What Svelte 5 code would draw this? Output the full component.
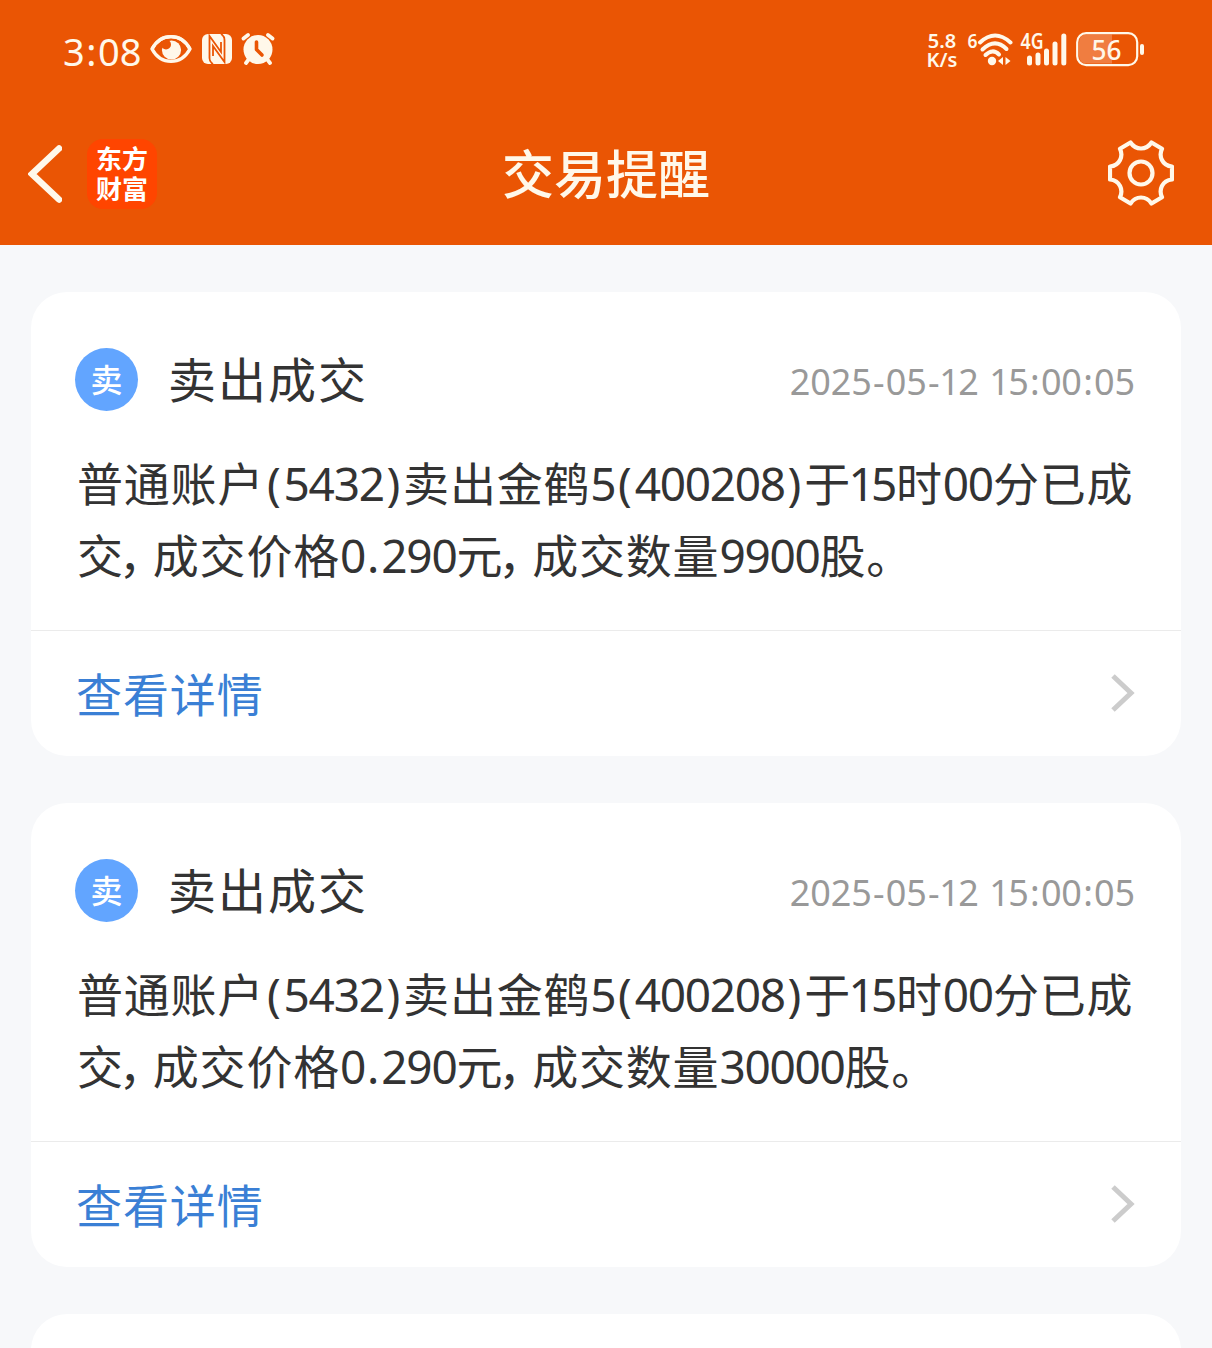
<!-- TradeAlerts.svelte -->
<script>
  /**
   * @type {{ title: string, time: string, lines: string[] }[]}
   */
  const alerts = [
    {
      title: '卖出成交',
      time: '2025-05-12 15:00:05',
      lines: ['普通账户(5432)卖出金鹤5(400208)于15时00分已成', '交，成交价格0.290元，成交数量9900股。']
    },
    {
      title: '卖出成交',
      time: '2025-05-12 15:00:05',
      lines: ['普通账户(5432)卖出金鹤5(400208)于15时00分已成', '交，成交价格0.290元，成交数量30000股。']
    }
  ];

  /**
   * Split a line into runs, so that each kind of glyph gets its own spacing
   * @param {string} text
   */
  function toRuns(text) {
    return text.match(/[()]|1|[02-9]+|[-.:\s]|，|[^\x00-\x7f，]+/g).map((run) => ({ run, kind: kindOf(run) }));
  }

  function kindOf(run) {
    if (run === '，') return 'comma';
    if (run === '1') return 'one';
    if (/[()]/.test(run)) return 'paren';
    if (/[-.:\s]/.test(run)) return 'mark';
    if (/\d/.test(run)) return 'num';
    return 'han';
  }
</script>

{#snippet runs(text)}{#each toRuns(text) as { run, kind }}<span class={kind}>{run}</span>{/each}{/snippet}

<div class="screen">
  <header>
    <div class="status">
      <div class="status-left">
        <span class="clock">{@render runs('3:08')}</span>
        <svg class="eye" width="42" height="30" viewBox="0 0 42 30">
          <path d="M2 15C11 -1.5 31 -1.5 40 15C31 31.5 11 31.5 2 15Z" fill="none" stroke="#fff8ea" stroke-width="3.4" stroke-linejoin="round" />
          <circle cx="21.500" cy="16" r="9.600" fill="#fff8ea" />
          <circle cx="16" cy="10.500" r="5" fill="#ea5504" />
          <path d="M2 15C11 -1.5 31 -1.5 40 15" fill="none" stroke="#fff8ea" stroke-width="3.4" />
        </svg>
        <svg class="nfc" width="30" height="30" viewBox="0 0 30 30">
          <rect width="30" height="30" rx="6" fill="#fff8ea" />
          <g fill="none" stroke="#ea5504" stroke-width="1.800">
            <path d="M11 30Q7.500 28 7.500 24V2L19 18V8" />
            <path d="M19 0Q22.500 2 22.500 6V28L11 12V22" />
          </g>
        </svg>
        <svg class="alarm" width="34" height="34" viewBox="0 0 34 34">
          <circle cx="17" cy="17.500" r="14.500" fill="#fff8ea" />
          <path d="M2.500 6.500L7 3M31.500 6.500L27 3M5 31L8 27M29 31L26 27" stroke="#fff8ea" stroke-width="3.800" stroke-linecap="round" />
          <path d="M15.500 10V17.500L21 23" fill="none" stroke="#ea5504" stroke-width="3.600" stroke-linecap="round" stroke-linejoin="round" />
        </svg>
      </div>
      <div class="status-right">
        <div class="speed"><span>5.8</span><span>K/s</span></div>
        <svg class="wifi" width="46" height="52" viewBox="0 -8 46 52">
          <text x="0.500" y="17" font-size="20" textLength="10" lengthAdjust="spacingAndGlyphs">6</text>
          <g fill="none" stroke="#fff8ea" stroke-width="4" stroke-linecap="round">
            <path d="M13 11.500Q28 -2.500 43.500 11.500" />
            <path d="M15.500 18.500Q28 6.500 39.500 18" />
            <path d="M18.500 24Q25.500 17 32 23.500" />
          </g>
          <circle cx="25" cy="30" r="4.200" fill="#fff8ea" />
          <path d="M36 26V34L31 30ZM38.500 26V34L43.500 30Z" fill="#fff8ea" />
        </svg>
        <svg class="signal" width="47" height="52" viewBox="0 -8 47 52">
          <text x="0.500" y="18" font-size="21" textLength="23" lengthAdjust="spacingAndGlyphs">4G</text>
          <g stroke="#fff8ea" stroke-width="5" stroke-linecap="round">
            <path d="M9.500 27V32" />
            <path d="M18 24V32" />
            <path d="M26.500 20V32" />
            <path d="M35 13V32" />
            <path d="M43.800 5V32" />
          </g>
        </svg>
        <svg class="battery" width="69" height="36" viewBox="0 0 69 36">
          <path d="M36 3.500V32.500H11Q3 32.500 3 24.500V11.500Q3 3.500 11 3.500Z" fill="#f07d40" />
          <rect x="1.200" y="2.200" width="60" height="32" rx="9" fill="none" stroke="#fff8ea" stroke-width="2.200" />
          <rect x="64" y="13" width="4" height="11" rx="2" fill="#fff8ea" />
          <text class="charge" x="15.500" y="28.500" font-size="27" textLength="30" lengthAdjust="spacingAndGlyphs">56</text>
        </svg>
      </div>
    </div>
    <nav>
      <div class="nav-side">
        <svg class="back" width="34" height="58" viewBox="0 0 34 58">
          <path d="M31 3.500L4 29L31 54.500" fill="none" stroke="#fff8ea" stroke-width="6.500" stroke-linecap="round" stroke-linejoin="miter" />
        </svg>
        <div class="logo"><span>东方</span><span>财富</span></div>
      </div>
      <h1>交易提醒</h1>
      <div class="nav-side end">
        <svg class="gear" width="66" height="66" viewBox="0 0 66 66">
          <path
            d="M12 8.800L22.500 2.500C25.500 7 29 8.500 33 8.500S40.500 7 43.500 2.500L54 8.800C50.500 16 54 25.500 64 26.500V39.500C54 40.500 50.500 50 54 57.200L43.500 63.500C40.500 59 37 57.500 33 57.500S25.500 59 22.500 63.500L12 57.200C15.500 50 12 40.500 2 39.500V26.500C12 25.500 15.500 16 12 8.800Z"
            fill="none" stroke="#fff8ea" stroke-width="4.200" stroke-linejoin="round"
          />
          <circle cx="33" cy="33" r="11.500" fill="none" stroke="#fff8ea" stroke-width="4.200" />
        </svg>
      </div>
    </nav>
  </header>

  <main>
    {#each alerts as alert}
      <article class="card">
        <div class="card-body">
          <div class="card-head">
            <span class="badge">卖</span>
            <h2>{alert.title}</h2>
            <time>{@render runs(alert.time)}</time>
          </div>
          <div class="message">
            {#each alert.lines as line}
              <p>{@render runs(line)}</p>
            {/each}
          </div>
        </div>
        <div class="card-link">
          <span>查看详情</span>
          <svg width="24" height="38" viewBox="0 0 24 38">
            <path d="M2 2L20 19L2 36" fill="none" stroke="#ccc" stroke-width="5" />
          </svg>
        </div>
      </article>
    {/each}
    <article class="card next"></article>
  </main>
</div>

<style>
  :global(body) {
    margin: 0;
    background: #f7f8fa;
  }

  .screen {
    height: 1348px;
    overflow: hidden;
    background: #f7f8fa;
    color: #333;
    font-family: 'Noto Sans', 'Noto Sans CJK SC', sans-serif;
  }

  header {
    height: 245px;
    background: #ea5504;
    color: #fff8ea;
  }

  .status {
    display: flex;
    justify-content: space-between;
    height: 98px;
    padding: 0 67px 0 63px;
  }

  .status-left,
  .status-right {
    display: flex;
    align-items: center;
  }

  .clock {
    width: 87px;
    font-size: 38px;
    line-height: 40px;
    padding-top: 4px;
    white-space: pre;
  }

  .clock .mark {
    padding: 0 1.5px;
  }

  .nfc {
    margin-left: 10px;
  }

  .alarm {
    margin-left: 9px;
  }

  .speed {
    display: flex;
    flex-direction: column;
    align-items: center;
    width: 34px;
    font-size: 20px;
    font-weight: 600;
    line-height: 19px;
    padding-top: 2px;
  }

  .status-right text {
    fill: #fff8ea;
    font-weight: 600;
  }

  .status-right .charge {
    font-weight: 500;
  }

  .wifi {
    margin-left: 8px;
  }

  .signal {
    margin-left: 7px;
  }

  .battery {
    margin-left: 9px;
  }

  nav {
    display: flex;
    align-items: center;
    justify-content: space-between;
    height: 147px;
    padding: 5px 38px 0 28px;
    box-sizing: border-box;
  }

  .nav-side {
    display: flex;
    align-items: center;
    width: 200px;
  }

  .nav-side.end {
    justify-content: flex-end;
    width: 190px;
  }

  .gear {
    margin-bottom: 3px;
  }

  .logo {
    display: flex;
    flex-direction: column;
    align-items: center;
    justify-content: center;
    width: 70px;
    height: 70px;
    margin-left: 25px;
    border-radius: 16px;
    background: #ff4500;
    color: #fff;
    font-size: 26px;
    font-weight: 700;
    line-height: 30px;
  }

  h1 {
    margin: 0;
    font-size: 52px;
    font-weight: 500;
    line-height: 70px;
  }

  main {
    display: flex;
    flex-direction: column;
    gap: 47px;
    padding: 47px 31px 0;
  }

  .card {
    flex: none;
    height: 464px;
    border-radius: 36px;
    background: #fff;
  }

  .card-body {
    height: 339px;
    box-sizing: border-box;
    padding: 56px 46px 0 44px;
    border-bottom: 1px solid #ebebeb;
  }

  .card-head {
    display: flex;
    align-items: center;
    height: 63px;
  }

  .badge {
    width: 63px;
    height: 63px;
    border-radius: 50%;
    background: #62a5ff;
    color: #fff;
    font-size: 32px;
    font-weight: 500;
    line-height: 63px;
    text-align: center;
  }

  h2 {
    margin: 0 0 0 30px;
    font-size: 48px;
    font-weight: 400;
    letter-spacing: 2px;
    line-height: 63px;
  }

  time {
    margin: 4px 0 0 auto;
    color: #999;
    font-size: 36px;
    letter-spacing: -0.1px;
    white-space: pre;
  }

  time .mark {
    padding: 0 1.3px;
  }

  time .one {
    margin: 0 -1.5px;
  }

  .message {
    margin: 36px 0 0 2px;
    font-size: 46px;
  }

  .message p {
    height: 72px;
    margin: 0;
    line-height: 72px;
    white-space: nowrap;
  }

  .message .han {
    letter-spacing: 0.8px;
  }

  .message .num,
  .message .one {
    letter-spacing: -1.3px;
  }

  .message .one {
    margin: 0 -2.5px;
  }

  .message .paren {
    padding: 0 2.8px;
  }

  .message .mark {
    padding: 0 2px;
  }

  /* half-width form of the comma, set close to the glyph before it */
  .message .comma {
    margin-left: -5px;
    font-feature-settings: 'halt';
    letter-spacing: 11px;
  }

  .card-link {
    display: flex;
    align-items: center;
    justify-content: space-between;
    height: 124px;
    padding: 0 46px 0 45px;
    color: #3a7fd5;
    font-size: 46px;
    letter-spacing: 0.9px;
  }

  .card-link span {
    margin-top: -2px;
  }
</style>
